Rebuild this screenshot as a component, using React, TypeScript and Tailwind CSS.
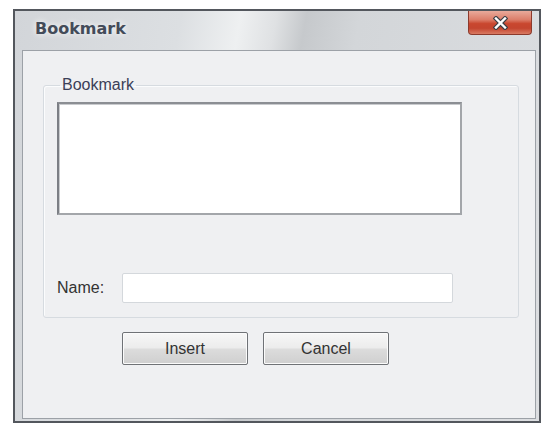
import React from 'react';

// Small Win7-style close glyph: dark outline under a white cross
function CloseGlyph() {
  return (
    <svg width="15" height="14" viewBox="0 0 15 14">
      <path d="M3 2.5 L12 11.5 M12 2.5 L3 11.5" stroke="#3b3f46" strokeWidth="4.6" strokeLinecap="square" />
      <path d="M3 2.5 L12 11.5 M12 2.5 L3 11.5" stroke="#ffffff" strokeWidth="2.4" strokeLinecap="square" />
    </svg>
  );
}

function DialogButton({ label }: { label: string }) {
  return (
    <button className="w-[126px] h-[33px] rounded-[2px] border border-[#6f7276] bg-[linear-gradient(to_bottom,#f7f7f7_0%,#ececec_48%,#dcdcdc_52%,#cfcfcf_100%)] shadow-[inset_0_0_0_1px_#fbfbfb] text-[16px] leading-4 text-[#333]">
      {label}
    </button>
  );
}

export default function App() {
  return (
    <div className="w-[546px] h-[425px] overflow-hidden bg-white pl-[13px] pt-[9px] font-['Liberation_Sans',Arial,sans-serif]">
      {/* window frame */}
      <div className="w-[528px] h-[414px] border-2 border-[#53575d] bg-[linear-gradient(100deg,#d2d5d9_0%,#dcdfe2_28%,#eef0f1_38%,#dfe1e3_44%,#c6c9cc_49%,#d3d6d9_58%,#dcdee1_100%)] flex flex-col">
        {/* title bar */}
        <div className="h-[39px] flex items-start justify-between">
          <div className="pl-[20px] pt-[8px] font-['DejaVu_Sans',sans-serif] font-bold text-[16px] leading-[19px] text-[#434b59] [text-shadow:0_0_6px_#ffffff]">
            Bookmark
          </div>
          <div className="mr-[7px] w-[64px] h-[24px] rounded-b-[4px] border border-t-0 border-[#8c3a2c] bg-[linear-gradient(to_bottom,#e9aa9b_0%,#dc7d69_38%,#c9472f_55%,#c4452f_75%,#d97a62_100%)] flex items-center justify-center">
            <CloseGlyph />
          </div>
        </div>

        {/* client area */}
        <div className="ml-[7px] w-[514px] h-[369px] border border-[#9ca1a7] bg-[#eff0f2] pl-[20px] pt-[26px]">
          <fieldset className="w-[476px] border border-[#d6dbe0] rounded-[3px] pl-[13px] pb-[14px] shadow-[inset_1px_1px_0_#fbfcfd]">
            <legend className="ml-[3px] px-[2px] text-[16px] leading-4 text-[#3b3f58]">Bookmark</legend>
            <textarea
              readOnly
              className="mt-[9px] block w-[405px] h-[113px] resize-none bg-white border-2 border-t-[#8b8e93] border-l-[#7c7f85] border-r-[#a3a6aa] border-b-[#a3a6aa] shadow-[inset_1px_1px_0_#c9cbce] outline-none"
            />
            <div className="mt-[58px] flex items-center">
              <span className="w-[65px] text-[16px] leading-4 text-[#333]">Name:</span>
              <input
                readOnly
                className="w-[331px] h-[30px] bg-white border border-[#d4d8dc] rounded-[2px] outline-none"
              />
            </div>
          </fieldset>

          <div className="mt-[14px] pl-[79px] flex gap-[15px]">
            <DialogButton label="Insert" />
            <DialogButton label="Cancel" />
          </div>
        </div>
      </div>
    </div>
  );
}
